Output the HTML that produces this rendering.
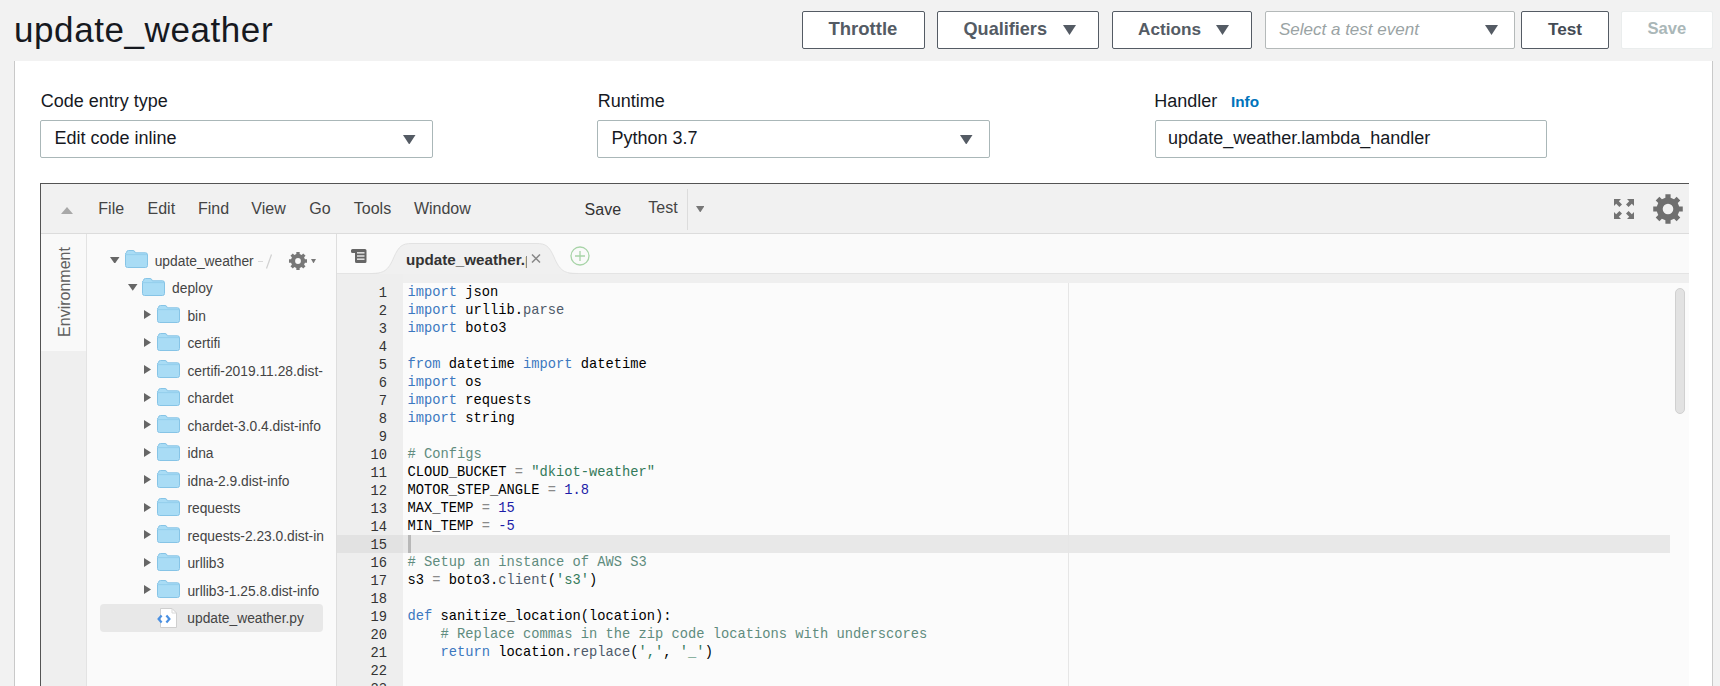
<!DOCTYPE html>
<html><head><meta charset="utf-8"><title>update_weather</title>
<style>
html,body{margin:0;padding:0;}
body{width:1720px;height:686px;overflow:hidden;position:relative;background:#f2f2f2;font-family:"Liberation Sans",sans-serif;}
.t,.r,.m{position:absolute;}
.t{white-space:nowrap;}
.m{font-family:"Liberation Mono",monospace;font-size:13.75px;line-height:18px;white-space:pre;}
</style></head><body>
<div class="r" style="left:14px;top:61px;width:1699px;height:625px;background:#fff;border-left:1px solid #c9c9c9;border-right:1px solid #c9c9c9;box-sizing:border-box"></div>
<div class="t" style="left:14.00px;top:11.97px;font-size:35px;line-height:35px;color:#16191f;font-weight:normal;font-style:normal;letter-spacing:0.58px;">update_weather</div>
<div class="r" style="left:802px;top:11px;width:123px;height:38px;border:1px solid #545b64;border-radius:2px;background:#fff;box-sizing:border-box"></div>
<div class="t" style="left:828.50px;top:19.84px;font-size:18.5px;line-height:18.5px;color:#545b64;font-weight:bold;font-style:normal;letter-spacing:0px;">Throttle</div>
<div class="r" style="left:937px;top:11px;width:162px;height:38px;border:1px solid #545b64;border-radius:2px;background:#fff;box-sizing:border-box"></div>
<div class="t" style="left:963.50px;top:20.18px;font-size:18.1px;line-height:18.1px;color:#545b64;font-weight:bold;font-style:normal;letter-spacing:0px;">Qualifiers</div>
<svg class="r" style="left:1062.5px;top:25px" width="13" height="10" viewBox="0 0 13 10"><polygon points="0,0 13,0 6.5,10" fill="#545b64"/></svg>
<div class="r" style="left:1112px;top:11px;width:140px;height:38px;border:1px solid #545b64;border-radius:2px;background:#fff;box-sizing:border-box"></div>
<div class="t" style="left:1138.00px;top:20.94px;font-size:17.2px;line-height:17.2px;color:#545b64;font-weight:bold;font-style:normal;letter-spacing:0px;">Actions</div>
<svg class="r" style="left:1215.5px;top:25px" width="13" height="10" viewBox="0 0 13 10"><polygon points="0,0 13,0 6.5,10" fill="#545b64"/></svg>
<div class="r" style="left:1265px;top:11px;width:250px;height:38px;border:1px solid #b4b9b9;border-radius:2px;background:#fff;box-sizing:border-box"></div>
<div class="t" style="left:1279.00px;top:20.61px;font-size:17px;line-height:17px;color:#9aa3a4;font-weight:normal;font-style:italic;letter-spacing:0px;">Select a test event</div>
<svg class="r" style="left:1484.5px;top:25px" width="13" height="10" viewBox="0 0 13 10"><polygon points="0,0 13,0 6.5,10" fill="#545b64"/></svg>
<div class="r" style="left:1521px;top:11px;width:88px;height:38px;border:1px solid #545b64;border-radius:2px;background:#fff;box-sizing:border-box"></div>
<div class="t" style="left:1548.00px;top:20.94px;font-size:17.2px;line-height:17.2px;color:#444b55;font-weight:bold;font-style:normal;letter-spacing:0px;">Test</div>
<div class="r" style="left:1621px;top:11px;width:92px;height:38px;border:1px solid #eaeded;border-radius:2px;background:#fff;box-sizing:border-box"></div>
<div class="t" style="left:1647.50px;top:21.45px;font-size:16.6px;line-height:16.6px;color:#aab7b8;font-weight:bold;font-style:normal;letter-spacing:0px;">Save</div>
<div class="t" style="left:40.70px;top:91.76px;font-size:18px;line-height:18px;color:#16191f;font-weight:normal;font-style:normal;letter-spacing:0px;">Code entry type</div>
<div class="r" style="left:40px;top:120px;width:393px;height:38px;border:1px solid #aab7b8;border-radius:2px;background:#fff;box-sizing:border-box"></div>
<div class="t" style="left:54.50px;top:128.76px;font-size:18px;line-height:18px;color:#16191f;font-weight:normal;font-style:normal;letter-spacing:0px;">Edit code inline</div>
<svg class="r" style="left:403px;top:134.5px" width="12.5" height="9.5" viewBox="0 0 12.5 9.5"><polygon points="0,0 12.5,0 6.25,9.5" fill="#545b64"/></svg>
<div class="t" style="left:597.70px;top:91.76px;font-size:18px;line-height:18px;color:#16191f;font-weight:normal;font-style:normal;letter-spacing:0px;">Runtime</div>
<div class="r" style="left:597px;top:120px;width:393px;height:38px;border:1px solid #aab7b8;border-radius:2px;background:#fff;box-sizing:border-box"></div>
<div class="t" style="left:611.50px;top:128.76px;font-size:18px;line-height:18px;color:#16191f;font-weight:normal;font-style:normal;letter-spacing:0px;">Python 3.7</div>
<svg class="r" style="left:960px;top:134.5px" width="12.5" height="9.5" viewBox="0 0 12.5 9.5"><polygon points="0,0 12.5,0 6.25,9.5" fill="#545b64"/></svg>
<div class="t" style="left:1154.30px;top:91.76px;font-size:18px;line-height:18px;color:#16191f;font-weight:normal;font-style:normal;letter-spacing:0px;">Handler</div>
<div class="r" style="left:1155px;top:120px;width:392px;height:38px;border:1px solid #aab7b8;border-radius:2px;background:#fff;box-sizing:border-box"></div>
<div class="t" style="left:1168.10px;top:128.76px;font-size:18px;line-height:18px;color:#16191f;font-weight:normal;font-style:normal;letter-spacing:0px;">update_weather.lambda_handler</div>
<div class="t" style="left:1231.00px;top:94.05px;font-size:15.3px;line-height:15.3px;color:#0073bb;font-weight:bold;font-style:normal;letter-spacing:0px;">Info</div>
<div class="r" style="left:40px;top:183px;width:1649px;height:503px;background:#fff;border-top:1px solid #545454;border-left:1px solid #545454;box-sizing:border-box"></div>
<div class="r" style="left:41px;top:184px;width:1648px;height:50px;background:#f1f1f1;border-bottom:1px solid #dcdcdc;box-sizing:border-box"></div>
<svg class="r" style="left:61px;top:206.5px" width="12" height="7" viewBox="0 0 12 7"><polygon points="0,7 12,7 6.0,0" fill="#a8a8a8"/></svg>
<div class="t" style="left:98.30px;top:201.06px;font-size:16px;line-height:16px;color:#444;font-weight:normal;font-style:normal;letter-spacing:0px;">File</div>
<div class="t" style="left:147.50px;top:201.06px;font-size:16px;line-height:16px;color:#444;font-weight:normal;font-style:normal;letter-spacing:0px;">Edit</div>
<div class="t" style="left:198.00px;top:201.06px;font-size:16px;line-height:16px;color:#444;font-weight:normal;font-style:normal;letter-spacing:0px;">Find</div>
<div class="t" style="left:251.30px;top:201.06px;font-size:16px;line-height:16px;color:#444;font-weight:normal;font-style:normal;letter-spacing:0px;">View</div>
<div class="t" style="left:309.20px;top:201.06px;font-size:16px;line-height:16px;color:#444;font-weight:normal;font-style:normal;letter-spacing:0px;">Go</div>
<div class="t" style="left:353.80px;top:201.06px;font-size:16px;line-height:16px;color:#444;font-weight:normal;font-style:normal;letter-spacing:0px;">Tools</div>
<div class="t" style="left:413.90px;top:201.06px;font-size:16px;line-height:16px;color:#444;font-weight:normal;font-style:normal;letter-spacing:0px;">Window</div>
<div class="t" style="left:584.60px;top:202.26px;font-size:16px;line-height:16px;color:#333;font-weight:normal;font-style:normal;letter-spacing:0px;">Save</div>
<div class="t" style="left:648.30px;top:200.16px;font-size:16px;line-height:16px;color:#444;font-weight:normal;font-style:normal;letter-spacing:0px;">Test</div>
<div class="r" style="left:687px;top:189px;width:1px;height:41px;background:#dcdcdc"></div>
<svg class="r" style="left:695.7px;top:205.6px" width="8.5" height="6.5" viewBox="0 0 8.5 6.5"><polygon points="0,0 8.5,0 4.25,6.5" fill="#777"/></svg>
<svg class="r" style="left:1613px;top:198px" width="22" height="22" viewBox="0 0 22 22"><g fill="#737373"><polygon points="1,1 8,1 5.8,3.2 9,6.4 6.4,9 3.2,5.8 1,8"/><polygon points="21,1 14,1 16.2,3.2 13,6.4 15.6,9 18.8,5.8 21,8"/><polygon points="1,21 8,21 5.8,18.8 9,15.6 6.4,13 3.2,16.2 1,14"/><polygon points="21,21 14,21 16.2,18.8 13,15.6 15.6,13 18.8,16.2 21,14"/></g></svg>
<svg class="r" style="left:1650px;top:191px" width="36" height="36" viewBox="0 0 36 36"><path fill-rule="evenodd" fill="#6f6f6f" d="M29.20,15.40 L32.77,15.40 L32.77,20.60 L29.20,20.60 L27.76,24.08 L30.28,26.61 L26.61,30.28 L24.08,27.76 L20.60,29.20 L20.60,32.77 L15.40,32.77 L15.40,29.20 L11.92,27.76 L9.39,30.28 L5.72,26.61 L8.24,24.08 L6.80,20.60 L3.23,20.60 L3.23,15.40 L6.80,15.40 L8.24,11.92 L5.72,9.39 L9.39,5.72 L11.92,8.24 L15.40,6.80 L15.40,3.23 L20.60,3.23 L20.60,6.80 L24.08,8.24 L26.61,5.72 L30.28,9.39 L27.76,11.92 Z M23.3,18 A5.3,5.3 0 1,0 12.7,18 A5.3,5.3 0 1,0 23.3,18 Z"/></svg>
<div class="r" style="left:41px;top:234px;width:46px;height:452px;background:#efefef;border-right:1px solid #e3e3e3;box-sizing:border-box"></div>
<div class="r" style="left:41px;top:234px;width:45px;height:117px;background:#f9f9f9"></div>
<div class="t" style="left:43px;top:234px;width:45px;height:117px;"><div style="position:absolute;left:22px;top:58px;transform:translate(-50%,-50%) rotate(-90deg);font-size:16px;line-height:16px;color:#606060;white-space:nowrap">Environment</div></div>
<div class="r" style="left:87px;top:234px;width:250px;height:452px;background:#fafafa;border-right:1px solid #dedede;box-sizing:border-box"></div>
<svg class="r" style="left:110.3px;top:256.5px" width="9.5" height="6.8" viewBox="0 0 9.5 6.8"><polygon points="0,0 9.5,0 4.75,6.8" fill="#666"/></svg>
<svg class="r" style="left:125px;top:250.0px" width="23" height="18" viewBox="0 0 23 18"><path d="M1.5,2.5 Q1.5,0.5 3.5,0.5 L8,0.5 Q9.5,0.5 10,2 L10.3,2.8 L20.5,2.8 Q22.5,2.8 22.5,4.8 L22.5,15.5 Q22.5,17.5 20.5,17.5 L2.5,17.5 Q0.5,17.5 0.5,15.5 L0.5,4.5 Q0.5,2.5 1.5,2.5 Z" fill="#a9dcf5" stroke="#86c4e6" stroke-width="1"/><path d="M0.8,4.6 L22.2,4.6" stroke="#86c4e6" stroke-width="0.6"/></svg>
<div class="t" style="left:154.70px;top:254.82px;font-size:13.8px;line-height:13.8px;color:#444;font-weight:normal;font-style:normal;letter-spacing:0px;">update_weather</div>
<svg class="r" style="left:128.0066px;top:284.0px" width="9.5" height="6.8" viewBox="0 0 9.5 6.8"><polygon points="0,0 9.5,0 4.75,6.8" fill="#666"/></svg>
<svg class="r" style="left:142px;top:277.5px" width="23" height="18" viewBox="0 0 23 18"><path d="M1.5,2.5 Q1.5,0.5 3.5,0.5 L8,0.5 Q9.5,0.5 10,2 L10.3,2.8 L20.5,2.8 Q22.5,2.8 22.5,4.8 L22.5,15.5 Q22.5,17.5 20.5,17.5 L2.5,17.5 Q0.5,17.5 0.5,15.5 L0.5,4.5 Q0.5,2.5 1.5,2.5 Z" fill="#a9dcf5" stroke="#86c4e6" stroke-width="1"/><path d="M0.8,4.6 L22.2,4.6" stroke="#86c4e6" stroke-width="0.6"/></svg>
<div class="t" style="left:172.10px;top:282.32px;font-size:13.8px;line-height:13.8px;color:#444;font-weight:normal;font-style:normal;letter-spacing:0px;">deploy</div>
<svg class="r" style="left:144px;top:310.0px" width="7" height="9" viewBox="0 0 7 9"><polygon points="0,0 7,4.5 0,9" fill="#666"/></svg>
<svg class="r" style="left:157.2px;top:305.0px" width="23" height="18" viewBox="0 0 23 18"><path d="M1.5,2.5 Q1.5,0.5 3.5,0.5 L8,0.5 Q9.5,0.5 10,2 L10.3,2.8 L20.5,2.8 Q22.5,2.8 22.5,4.8 L22.5,15.5 Q22.5,17.5 20.5,17.5 L2.5,17.5 Q0.5,17.5 0.5,15.5 L0.5,4.5 Q0.5,2.5 1.5,2.5 Z" fill="#a9dcf5" stroke="#86c4e6" stroke-width="1"/><path d="M0.8,4.6 L22.2,4.6" stroke="#86c4e6" stroke-width="0.6"/></svg>
<div class="t" style="left:187.40px;top:309.82px;font-size:13.8px;line-height:13.8px;color:#444;font-weight:normal;font-style:normal;letter-spacing:0px;">bin</div>
<svg class="r" style="left:144px;top:337.5px" width="7" height="9" viewBox="0 0 7 9"><polygon points="0,0 7,4.5 0,9" fill="#666"/></svg>
<svg class="r" style="left:157.2px;top:332.5px" width="23" height="18" viewBox="0 0 23 18"><path d="M1.5,2.5 Q1.5,0.5 3.5,0.5 L8,0.5 Q9.5,0.5 10,2 L10.3,2.8 L20.5,2.8 Q22.5,2.8 22.5,4.8 L22.5,15.5 Q22.5,17.5 20.5,17.5 L2.5,17.5 Q0.5,17.5 0.5,15.5 L0.5,4.5 Q0.5,2.5 1.5,2.5 Z" fill="#a9dcf5" stroke="#86c4e6" stroke-width="1"/><path d="M0.8,4.6 L22.2,4.6" stroke="#86c4e6" stroke-width="0.6"/></svg>
<div class="t" style="left:187.40px;top:337.32px;font-size:13.8px;line-height:13.8px;color:#444;font-weight:normal;font-style:normal;letter-spacing:0px;">certifi</div>
<svg class="r" style="left:144px;top:365.0px" width="7" height="9" viewBox="0 0 7 9"><polygon points="0,0 7,4.5 0,9" fill="#666"/></svg>
<svg class="r" style="left:157.2px;top:360.0px" width="23" height="18" viewBox="0 0 23 18"><path d="M1.5,2.5 Q1.5,0.5 3.5,0.5 L8,0.5 Q9.5,0.5 10,2 L10.3,2.8 L20.5,2.8 Q22.5,2.8 22.5,4.8 L22.5,15.5 Q22.5,17.5 20.5,17.5 L2.5,17.5 Q0.5,17.5 0.5,15.5 L0.5,4.5 Q0.5,2.5 1.5,2.5 Z" fill="#a9dcf5" stroke="#86c4e6" stroke-width="1"/><path d="M0.8,4.6 L22.2,4.6" stroke="#86c4e6" stroke-width="0.6"/></svg>
<div class="t" style="left:187.40px;top:364.82px;font-size:13.8px;line-height:13.8px;color:#444;font-weight:normal;font-style:normal;letter-spacing:0px;">certifi-2019.11.28.dist-</div>
<svg class="r" style="left:144px;top:392.5px" width="7" height="9" viewBox="0 0 7 9"><polygon points="0,0 7,4.5 0,9" fill="#666"/></svg>
<svg class="r" style="left:157.2px;top:387.5px" width="23" height="18" viewBox="0 0 23 18"><path d="M1.5,2.5 Q1.5,0.5 3.5,0.5 L8,0.5 Q9.5,0.5 10,2 L10.3,2.8 L20.5,2.8 Q22.5,2.8 22.5,4.8 L22.5,15.5 Q22.5,17.5 20.5,17.5 L2.5,17.5 Q0.5,17.5 0.5,15.5 L0.5,4.5 Q0.5,2.5 1.5,2.5 Z" fill="#a9dcf5" stroke="#86c4e6" stroke-width="1"/><path d="M0.8,4.6 L22.2,4.6" stroke="#86c4e6" stroke-width="0.6"/></svg>
<div class="t" style="left:187.40px;top:392.32px;font-size:13.8px;line-height:13.8px;color:#444;font-weight:normal;font-style:normal;letter-spacing:0px;">chardet</div>
<svg class="r" style="left:144px;top:420.0px" width="7" height="9" viewBox="0 0 7 9"><polygon points="0,0 7,4.5 0,9" fill="#666"/></svg>
<svg class="r" style="left:157.2px;top:415.0px" width="23" height="18" viewBox="0 0 23 18"><path d="M1.5,2.5 Q1.5,0.5 3.5,0.5 L8,0.5 Q9.5,0.5 10,2 L10.3,2.8 L20.5,2.8 Q22.5,2.8 22.5,4.8 L22.5,15.5 Q22.5,17.5 20.5,17.5 L2.5,17.5 Q0.5,17.5 0.5,15.5 L0.5,4.5 Q0.5,2.5 1.5,2.5 Z" fill="#a9dcf5" stroke="#86c4e6" stroke-width="1"/><path d="M0.8,4.6 L22.2,4.6" stroke="#86c4e6" stroke-width="0.6"/></svg>
<div class="t" style="left:187.40px;top:419.82px;font-size:13.8px;line-height:13.8px;color:#444;font-weight:normal;font-style:normal;letter-spacing:0px;">chardet-3.0.4.dist-info</div>
<svg class="r" style="left:144px;top:447.5px" width="7" height="9" viewBox="0 0 7 9"><polygon points="0,0 7,4.5 0,9" fill="#666"/></svg>
<svg class="r" style="left:157.2px;top:442.5px" width="23" height="18" viewBox="0 0 23 18"><path d="M1.5,2.5 Q1.5,0.5 3.5,0.5 L8,0.5 Q9.5,0.5 10,2 L10.3,2.8 L20.5,2.8 Q22.5,2.8 22.5,4.8 L22.5,15.5 Q22.5,17.5 20.5,17.5 L2.5,17.5 Q0.5,17.5 0.5,15.5 L0.5,4.5 Q0.5,2.5 1.5,2.5 Z" fill="#a9dcf5" stroke="#86c4e6" stroke-width="1"/><path d="M0.8,4.6 L22.2,4.6" stroke="#86c4e6" stroke-width="0.6"/></svg>
<div class="t" style="left:187.40px;top:447.32px;font-size:13.8px;line-height:13.8px;color:#444;font-weight:normal;font-style:normal;letter-spacing:0px;">idna</div>
<svg class="r" style="left:144px;top:475.0px" width="7" height="9" viewBox="0 0 7 9"><polygon points="0,0 7,4.5 0,9" fill="#666"/></svg>
<svg class="r" style="left:157.2px;top:470.0px" width="23" height="18" viewBox="0 0 23 18"><path d="M1.5,2.5 Q1.5,0.5 3.5,0.5 L8,0.5 Q9.5,0.5 10,2 L10.3,2.8 L20.5,2.8 Q22.5,2.8 22.5,4.8 L22.5,15.5 Q22.5,17.5 20.5,17.5 L2.5,17.5 Q0.5,17.5 0.5,15.5 L0.5,4.5 Q0.5,2.5 1.5,2.5 Z" fill="#a9dcf5" stroke="#86c4e6" stroke-width="1"/><path d="M0.8,4.6 L22.2,4.6" stroke="#86c4e6" stroke-width="0.6"/></svg>
<div class="t" style="left:187.40px;top:474.82px;font-size:13.8px;line-height:13.8px;color:#444;font-weight:normal;font-style:normal;letter-spacing:0px;">idna-2.9.dist-info</div>
<svg class="r" style="left:144px;top:502.5px" width="7" height="9" viewBox="0 0 7 9"><polygon points="0,0 7,4.5 0,9" fill="#666"/></svg>
<svg class="r" style="left:157.2px;top:497.5px" width="23" height="18" viewBox="0 0 23 18"><path d="M1.5,2.5 Q1.5,0.5 3.5,0.5 L8,0.5 Q9.5,0.5 10,2 L10.3,2.8 L20.5,2.8 Q22.5,2.8 22.5,4.8 L22.5,15.5 Q22.5,17.5 20.5,17.5 L2.5,17.5 Q0.5,17.5 0.5,15.5 L0.5,4.5 Q0.5,2.5 1.5,2.5 Z" fill="#a9dcf5" stroke="#86c4e6" stroke-width="1"/><path d="M0.8,4.6 L22.2,4.6" stroke="#86c4e6" stroke-width="0.6"/></svg>
<div class="t" style="left:187.40px;top:502.32px;font-size:13.8px;line-height:13.8px;color:#444;font-weight:normal;font-style:normal;letter-spacing:0px;">requests</div>
<svg class="r" style="left:144px;top:530.0px" width="7" height="9" viewBox="0 0 7 9"><polygon points="0,0 7,4.5 0,9" fill="#666"/></svg>
<svg class="r" style="left:157.2px;top:525.0px" width="23" height="18" viewBox="0 0 23 18"><path d="M1.5,2.5 Q1.5,0.5 3.5,0.5 L8,0.5 Q9.5,0.5 10,2 L10.3,2.8 L20.5,2.8 Q22.5,2.8 22.5,4.8 L22.5,15.5 Q22.5,17.5 20.5,17.5 L2.5,17.5 Q0.5,17.5 0.5,15.5 L0.5,4.5 Q0.5,2.5 1.5,2.5 Z" fill="#a9dcf5" stroke="#86c4e6" stroke-width="1"/><path d="M0.8,4.6 L22.2,4.6" stroke="#86c4e6" stroke-width="0.6"/></svg>
<div class="t" style="left:187.40px;top:529.82px;font-size:13.8px;line-height:13.8px;color:#444;font-weight:normal;font-style:normal;letter-spacing:0px;">requests-2.23.0.dist-in</div>
<svg class="r" style="left:144px;top:557.5px" width="7" height="9" viewBox="0 0 7 9"><polygon points="0,0 7,4.5 0,9" fill="#666"/></svg>
<svg class="r" style="left:157.2px;top:552.5px" width="23" height="18" viewBox="0 0 23 18"><path d="M1.5,2.5 Q1.5,0.5 3.5,0.5 L8,0.5 Q9.5,0.5 10,2 L10.3,2.8 L20.5,2.8 Q22.5,2.8 22.5,4.8 L22.5,15.5 Q22.5,17.5 20.5,17.5 L2.5,17.5 Q0.5,17.5 0.5,15.5 L0.5,4.5 Q0.5,2.5 1.5,2.5 Z" fill="#a9dcf5" stroke="#86c4e6" stroke-width="1"/><path d="M0.8,4.6 L22.2,4.6" stroke="#86c4e6" stroke-width="0.6"/></svg>
<div class="t" style="left:187.40px;top:557.32px;font-size:13.8px;line-height:13.8px;color:#444;font-weight:normal;font-style:normal;letter-spacing:0px;">urllib3</div>
<svg class="r" style="left:144px;top:585.0px" width="7" height="9" viewBox="0 0 7 9"><polygon points="0,0 7,4.5 0,9" fill="#666"/></svg>
<svg class="r" style="left:157.2px;top:580.0px" width="23" height="18" viewBox="0 0 23 18"><path d="M1.5,2.5 Q1.5,0.5 3.5,0.5 L8,0.5 Q9.5,0.5 10,2 L10.3,2.8 L20.5,2.8 Q22.5,2.8 22.5,4.8 L22.5,15.5 Q22.5,17.5 20.5,17.5 L2.5,17.5 Q0.5,17.5 0.5,15.5 L0.5,4.5 Q0.5,2.5 1.5,2.5 Z" fill="#a9dcf5" stroke="#86c4e6" stroke-width="1"/><path d="M0.8,4.6 L22.2,4.6" stroke="#86c4e6" stroke-width="0.6"/></svg>
<div class="t" style="left:187.40px;top:584.82px;font-size:13.8px;line-height:13.8px;color:#444;font-weight:normal;font-style:normal;letter-spacing:0px;">urllib3-1.25.8.dist-info</div>
<div class="r" style="left:100px;top:604px;width:223px;height:28px;background:#e8e8e8;border-radius:4px"></div>
<svg class="r" style="left:156px;top:607px" width="23" height="22" viewBox="0 0 23 22"><path d="M4.5,1.5 L16,1.5 L20.5,6 L20.5,20.5 L4.5,20.5 Z" fill="#fff" stroke="#cfcfcf" stroke-width="1"/><path d="M16,1.5 L16,6 L20.5,6" fill="none" stroke="#d8d8d8" stroke-width="1"/><path d="M5.6,8.5 L2.6,12 L5.6,15.5" fill="none" stroke="#4a90e2" stroke-width="2.2"/><path d="M10.4,8.5 L13.4,12 L10.4,15.5" fill="none" stroke="#4a90e2" stroke-width="2.2"/></svg>
<div class="t" style="left:187.30px;top:611.82px;font-size:13.8px;line-height:13.8px;color:#444;font-weight:normal;font-style:normal;letter-spacing:0px;">update_weather.py</div>
<div class="r" style="left:258px;top:261px;width:5px;height:1px;background:#d8d8d8"></div>
<svg class="r" style="left:265px;top:254px" width="8" height="15" viewBox="0 0 8 15"><path d="M6.5,0.5 L1.5,14.5" stroke="#d0d0d0" stroke-width="1.2"/></svg>
<svg class="r" style="left:288px;top:251px" width="20" height="20" viewBox="0 0 36 36"><path fill-rule="evenodd" fill="#777" d="M30.44,15.00 L34.22,15.00 L34.22,21.00 L30.44,21.00 L28.92,24.68 L31.59,27.35 L27.35,31.59 L24.68,28.92 L21.00,30.44 L21.00,34.22 L15.00,34.22 L15.00,30.44 L11.32,28.92 L8.65,31.59 L4.41,27.35 L7.08,24.68 L5.56,21.00 L1.78,21.00 L1.78,15.00 L5.56,15.00 L7.08,11.32 L4.41,8.65 L8.65,4.41 L11.32,7.08 L15.00,5.56 L15.00,1.78 L21.00,1.78 L21.00,5.56 L24.68,7.08 L27.35,4.41 L31.59,8.65 L28.92,11.32 Z M23.2,18 A5.2,5.2 0 1,0 12.8,18 A5.2,5.2 0 1,0 23.2,18 Z"/></svg>
<svg class="r" style="left:311px;top:258.5px" width="5" height="4.5" viewBox="0 0 5 4.5"><polygon points="0,0 5,0 2.5,4.5" fill="#777"/></svg>
<div class="r" style="left:337px;top:234px;width:1352px;height:40px;background:#fafafa;border-bottom:1px solid #e4e4e4;box-sizing:border-box"></div>
<svg class="r" style="left:370px;top:243px" width="210" height="41" viewBox="0 0 210 41"><path d="M0,31 C14,31 18,28 24,14 C29,3 32,0.5 42,0.5 L166,0.5 C176,0.5 179,3 184,14 C190,28 194,31 208,31 L208,41 L0,41 Z" fill="#f0f0f0"/><path d="M0,30.5 C14,30.5 18,28 24,14 C29,3 32,0.5 42,0.5 L166,0.5 C176,0.5 179,3 184,14 C190,28 194,30.5 208,30.5" fill="none" stroke="#e2e2e2" stroke-width="1"/></svg>
<div class="r" style="left:337px;top:274px;width:1352px;height:9px;background:#efefef"></div>
<div class="r" style="left:337px;top:274px;width:66px;height:412px;background:#eeeeee"></div>
<div class="r" style="left:403px;top:283px;width:1286px;height:403px;background:#fbfbfb"></div>
<svg class="r" style="left:350px;top:248px" width="18" height="16" viewBox="0 0 18 16"><path d="M1,2.5 Q1,1 2.5,1 L15,1 Q16.5,1 16.5,2.5 L16.5,13.5 Q16.5,15 15,15 L6.5,15 Q5,15 5,13.5 L5,5 L2.5,5 Q1,5 1,3.5 Z" fill="#666"/><rect x="7" y="4" width="7.5" height="1.6" fill="#ddd"/><rect x="7" y="7.2" width="7.5" height="1.6" fill="#ddd"/><rect x="7" y="10.4" width="7.5" height="1.6" fill="#ddd"/></svg>
<div class="t" style="left:406px;top:250px;width:120px;height:22px;overflow:hidden;white-space:nowrap"><div class="t" style="left:0.00px;top:1.73px;font-size:15.2px;line-height:15.2px;color:#333;font-weight:bold;font-style:normal;letter-spacing:0px;">update_weather.py</div></div>
<div class="r" style="left:526px;top:256px;width:1px;height:12px;background:#888"></div>
<svg class="r" style="left:531px;top:254px" width="10" height="9" viewBox="0 0 10 9"><path d="M1,0.5 L9,8.5 M9,0.5 L1,8.5" stroke="#888" stroke-width="1.5"/></svg>
<svg class="r" style="left:570px;top:246px" width="20" height="20" viewBox="0 0 20 20"><circle cx="10" cy="10" r="9" fill="none" stroke="#a8d4a8" stroke-width="1.3"/><path d="M10,5 L10,15 M5,10 L15,10" stroke="#a8d4a8" stroke-width="1.3"/></svg>
<div class="r" style="left:337px;top:535px;width:66px;height:18px;background:#e2e2e2"></div>
<div class="r" style="left:403px;top:535px;width:1267px;height:18px;background:#e8e8e8"></div>
<div class="r" style="left:408px;top:535px;width:2.5px;height:18px;background:#b8b8b8"></div>
<div class="r" style="left:1068px;top:283px;width:1px;height:403px;background:#e6e6e6"></div>
<div class="r" style="left:1675px;top:288px;width:10px;height:126px;background:#e2e2e2;border:1px solid #d0d0d0;border-radius:5px;box-sizing:border-box"></div>
<div class="m" style="left:337px;top:284.5px;width:50px;text-align:right;color:#333">1</div>
<div class="m" style="left:407.5px;top:283.9px;color:#000"><span style="color:#3c78c0">import</span> json</div>
<div class="m" style="left:337px;top:302.5px;width:50px;text-align:right;color:#333">2</div>
<div class="m" style="left:407.5px;top:301.9px;color:#000"><span style="color:#3c78c0">import</span> urllib.<span style="color:#4e5a6a">parse</span></div>
<div class="m" style="left:337px;top:320.5px;width:50px;text-align:right;color:#333">3</div>
<div class="m" style="left:407.5px;top:319.9px;color:#000"><span style="color:#3c78c0">import</span> boto3</div>
<div class="m" style="left:337px;top:338.5px;width:50px;text-align:right;color:#333">4</div>
<div class="m" style="left:407.5px;top:337.9px;color:#000"></div>
<div class="m" style="left:337px;top:356.5px;width:50px;text-align:right;color:#333">5</div>
<div class="m" style="left:407.5px;top:355.9px;color:#000"><span style="color:#3c78c0">from</span> datetime <span style="color:#3c78c0">import</span> datetime</div>
<div class="m" style="left:337px;top:374.5px;width:50px;text-align:right;color:#333">6</div>
<div class="m" style="left:407.5px;top:373.9px;color:#000"><span style="color:#3c78c0">import</span> os</div>
<div class="m" style="left:337px;top:392.5px;width:50px;text-align:right;color:#333">7</div>
<div class="m" style="left:407.5px;top:391.9px;color:#000"><span style="color:#3c78c0">import</span> requests</div>
<div class="m" style="left:337px;top:410.5px;width:50px;text-align:right;color:#333">8</div>
<div class="m" style="left:407.5px;top:409.9px;color:#000"><span style="color:#3c78c0">import</span> string</div>
<div class="m" style="left:337px;top:428.5px;width:50px;text-align:right;color:#333">9</div>
<div class="m" style="left:407.5px;top:427.9px;color:#000"></div>
<div class="m" style="left:337px;top:446.5px;width:50px;text-align:right;color:#333">10</div>
<div class="m" style="left:407.5px;top:445.9px;color:#000"><span style="color:#5f8c7e"># Configs</span></div>
<div class="m" style="left:337px;top:464.5px;width:50px;text-align:right;color:#333">11</div>
<div class="m" style="left:407.5px;top:463.9px;color:#000">CLOUD_BUCKET <span style="color:#8a8a8a">=</span> <span style="color:#337a5a">"dkiot-weather"</span></div>
<div class="m" style="left:337px;top:482.5px;width:50px;text-align:right;color:#333">12</div>
<div class="m" style="left:407.5px;top:481.9px;color:#000">MOTOR_STEP_ANGLE <span style="color:#8a8a8a">=</span> <span style="color:#1d1da8">1.8</span></div>
<div class="m" style="left:337px;top:500.5px;width:50px;text-align:right;color:#333">13</div>
<div class="m" style="left:407.5px;top:499.9px;color:#000">MAX_TEMP <span style="color:#8a8a8a">=</span> <span style="color:#1d1da8">15</span></div>
<div class="m" style="left:337px;top:518.5px;width:50px;text-align:right;color:#333">14</div>
<div class="m" style="left:407.5px;top:517.9px;color:#000">MIN_TEMP <span style="color:#8a8a8a">=</span> <span style="color:#1d1da8">-5</span></div>
<div class="m" style="left:337px;top:536.5px;width:50px;text-align:right;color:#333">15</div>
<div class="m" style="left:407.5px;top:535.9px;color:#000"></div>
<div class="m" style="left:337px;top:554.5px;width:50px;text-align:right;color:#333">16</div>
<div class="m" style="left:407.5px;top:553.9px;color:#000"><span style="color:#5f8c7e"># Setup an instance of AWS S3</span></div>
<div class="m" style="left:337px;top:572.5px;width:50px;text-align:right;color:#333">17</div>
<div class="m" style="left:407.5px;top:571.9px;color:#000">s3 <span style="color:#8a8a8a">=</span> boto3.<span style="color:#4e5a6a">client</span>(<span style="color:#337a5a">'s3'</span>)</div>
<div class="m" style="left:337px;top:590.5px;width:50px;text-align:right;color:#333">18</div>
<div class="m" style="left:407.5px;top:589.9px;color:#000"></div>
<div class="m" style="left:337px;top:608.5px;width:50px;text-align:right;color:#333">19</div>
<div class="m" style="left:407.5px;top:607.9px;color:#000"><span style="color:#3c78c0">def</span> sanitize_location(location):</div>
<div class="m" style="left:337px;top:626.5px;width:50px;text-align:right;color:#333">20</div>
<div class="m" style="left:407.5px;top:625.9px;color:#000">    <span style="color:#5f8c7e"># Replace commas in the zip code locations with underscores</span></div>
<div class="m" style="left:337px;top:644.5px;width:50px;text-align:right;color:#333">21</div>
<div class="m" style="left:407.5px;top:643.9px;color:#000">    <span style="color:#3c78c0">return</span> location.<span style="color:#4e5a6a">replace</span>(<span style="color:#337a5a">','</span>, <span style="color:#337a5a">'_'</span>)</div>
<div class="m" style="left:337px;top:662.5px;width:50px;text-align:right;color:#333">22</div>
<div class="m" style="left:407.5px;top:661.9px;color:#000"></div>
<div class="m" style="left:337px;top:680.5px;width:50px;text-align:right;color:#333">23</div>
<div class="m" style="left:407.5px;top:679.9px;color:#000"></div>
</body></html>
